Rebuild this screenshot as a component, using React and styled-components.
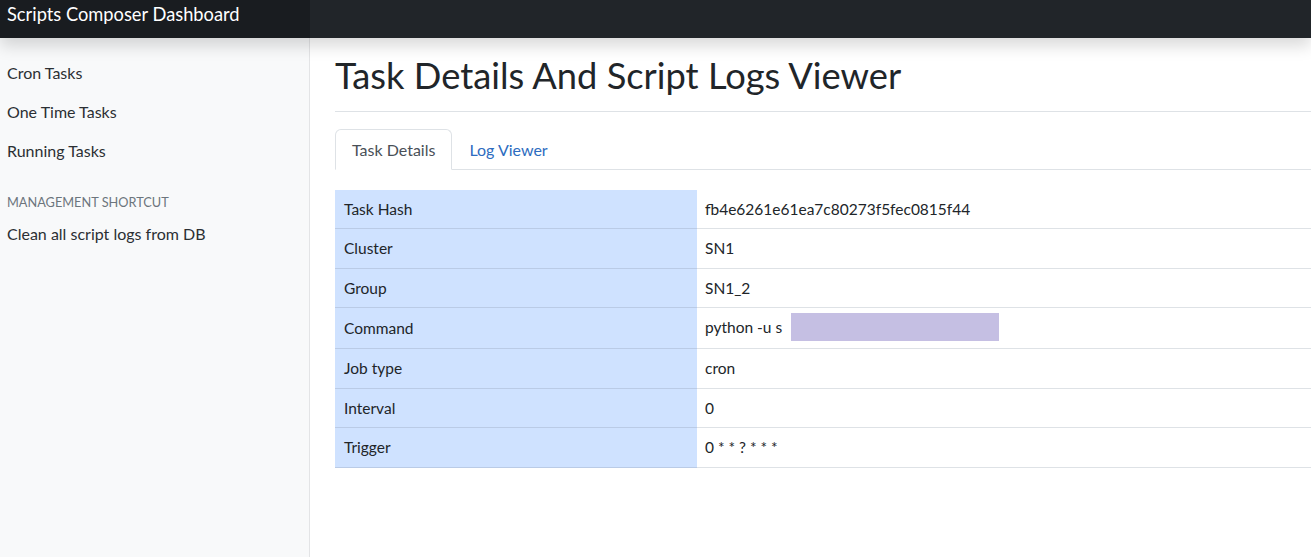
import styled, { createGlobalStyle } from "styled-components";

const GlobalStyle = createGlobalStyle`
  html, body {
    margin: 0;
    padding: 0;
    background: #fff;
  }
  body {
    font-family: Lato, "Open Sans", "Liberation Sans", sans-serif;
    color: #212529;
    overflow: hidden;
  }
  * {
    box-sizing: border-box;
  }
`;

const details = [
  { label: "Task Hash", value: "fb4e6261e61ea7c80273f5fec0815f44" },
  { label: "Cluster", value: "SN1" },
  { label: "Group", value: "SN1_2" },
  { label: "Command", value: "python -u s", redacted: true },
  { label: "Job type", value: "cron" },
  { label: "Interval", value: "0" },
  { label: "Trigger", value: "0 * * ? * * *" },
];

export default function App() {
  return (
    <>
      <GlobalStyle />
      <Styled.Navbar>
        <Styled.Brand>Scripts Composer Dashboard</Styled.Brand>
      </Styled.Navbar>

      <Styled.Layout>
        {/* Menu lateral */}
        <Styled.Sidebar>
          <Styled.NavLink>Cron Tasks</Styled.NavLink>
          <Styled.NavLink>One Time Tasks</Styled.NavLink>
          <Styled.NavLink>Running Tasks</Styled.NavLink>
          <Styled.Heading>Management Shortcut</Styled.Heading>
          <Styled.NavLink>Clean all script logs from DB</Styled.NavLink>
        </Styled.Sidebar>

        {/* Conteúdo */}
        <Styled.Main>
          <Styled.Header>
            <Styled.Title>Task Details And Script Logs Viewer</Styled.Title>
          </Styled.Header>

          <Styled.Tabs>
            <Styled.Tab active>Task Details</Styled.Tab>
            <Styled.Tab>Log Viewer</Styled.Tab>
          </Styled.Tabs>

          <Styled.Table>
            <tbody>
              {details.map((row) => (
                <tr key={row.label}>
                  <Styled.LabelCell>{row.label}</Styled.LabelCell>
                  <Styled.ValueCell>
                    {row.value}
                    {row.redacted && <Styled.Redacted />}
                  </Styled.ValueCell>
                </tr>
              ))}
            </tbody>
          </Styled.Table>
        </Styled.Main>
      </Styled.Layout>
    </>
  );
}

const Styled = {
  Navbar: styled.header`
    position: relative;
    z-index: 2;
    display: flex;
    height: 38px;
    background: #212529;
    box-shadow: 0 0.5rem 1rem rgba(0, 0, 0, 0.15);
  `,

  Brand: styled.div`
    width: 310px;
    padding: 2px 7px 0;
    background: rgba(0, 0, 0, 0.22);
    color: #fff;
    font-size: 18.3px;
    line-height: 24px;
    white-space: nowrap;
  `,

  Layout: styled.div`
    display: flex;
    min-height: calc(100vh - 38px);
  `,

  Sidebar: styled.nav`
    flex: 0 0 310px;
    padding-top: 15px;
    background: #f8f9fa;
    border-right: 1px solid #e3e4e6;
    display: flex;
    flex-direction: column;
  `,

  NavLink: styled.a`
    display: block;
    padding: 8px 7px;
    font-size: 16px;
    line-height: 23px;
    color: #2b2f33;
    cursor: pointer;
  `,

  Heading: styled.h6`
    margin: 23px 0 3px;
    padding: 0 7px;
    font-size: 12.75px;
    line-height: 18px;
    font-weight: 400;
    text-transform: uppercase;
    color: #6c757d;
  `,

  Main: styled.main`
    flex: 1;
    min-width: 0;
    padding-left: 25px;
  `,

  Header: styled.div`
    padding: 13px 0 12px;
    border-bottom: 1px solid #dee2e6;
  `,

  Title: styled.h1`
    margin: 0;
    font-size: 36.3px;
    line-height: 48px;
    font-weight: 400;
    color: #212529;
  `,

  Tabs: styled.div`
    display: flex;
    margin-top: 17px;
    border-bottom: 1px solid #dee2e6;
  `,

  Tab: styled.a`
    margin-bottom: -1px;
    padding: 8px 16px;
    font-size: 16px;
    line-height: 23px;
    border: 1px solid ${({ active }) => (active ? "#dee2e6" : "transparent")};
    border-bottom-color: ${({ active }) => (active ? "#fff" : "transparent")};
    border-radius: 6px 6px 0 0;
    background: ${({ active }) => (active ? "#fff" : "transparent")};
    color: ${({ active }) => (active ? "#495057" : "#2d6cc0")};
    cursor: pointer;
  `,

  Table: styled.table`
    width: 100%;
    margin-top: 20px;
    border-collapse: collapse;
    font-size: 15.5px;
  `,

  LabelCell: styled.td`
    width: 362px;
    padding: 8px 9px;
    line-height: 22.4px;
    background: #cfe2ff;
    border-bottom: 1px solid #bacbe6;
    color: #212529;
  `,

  ValueCell: styled.td`
    padding: 8px 8px;
    line-height: 22.4px;
    border-bottom: 1px solid #dee2e6;
    color: #212529;
    white-space: nowrap;
  `,

  Redacted: styled.span`
    display: inline-block;
    width: 208px;
    height: 28px;
    margin: -5px 0 -1px 9px;
    vertical-align: middle;
    background: #c5bfe3;
  `,
};
